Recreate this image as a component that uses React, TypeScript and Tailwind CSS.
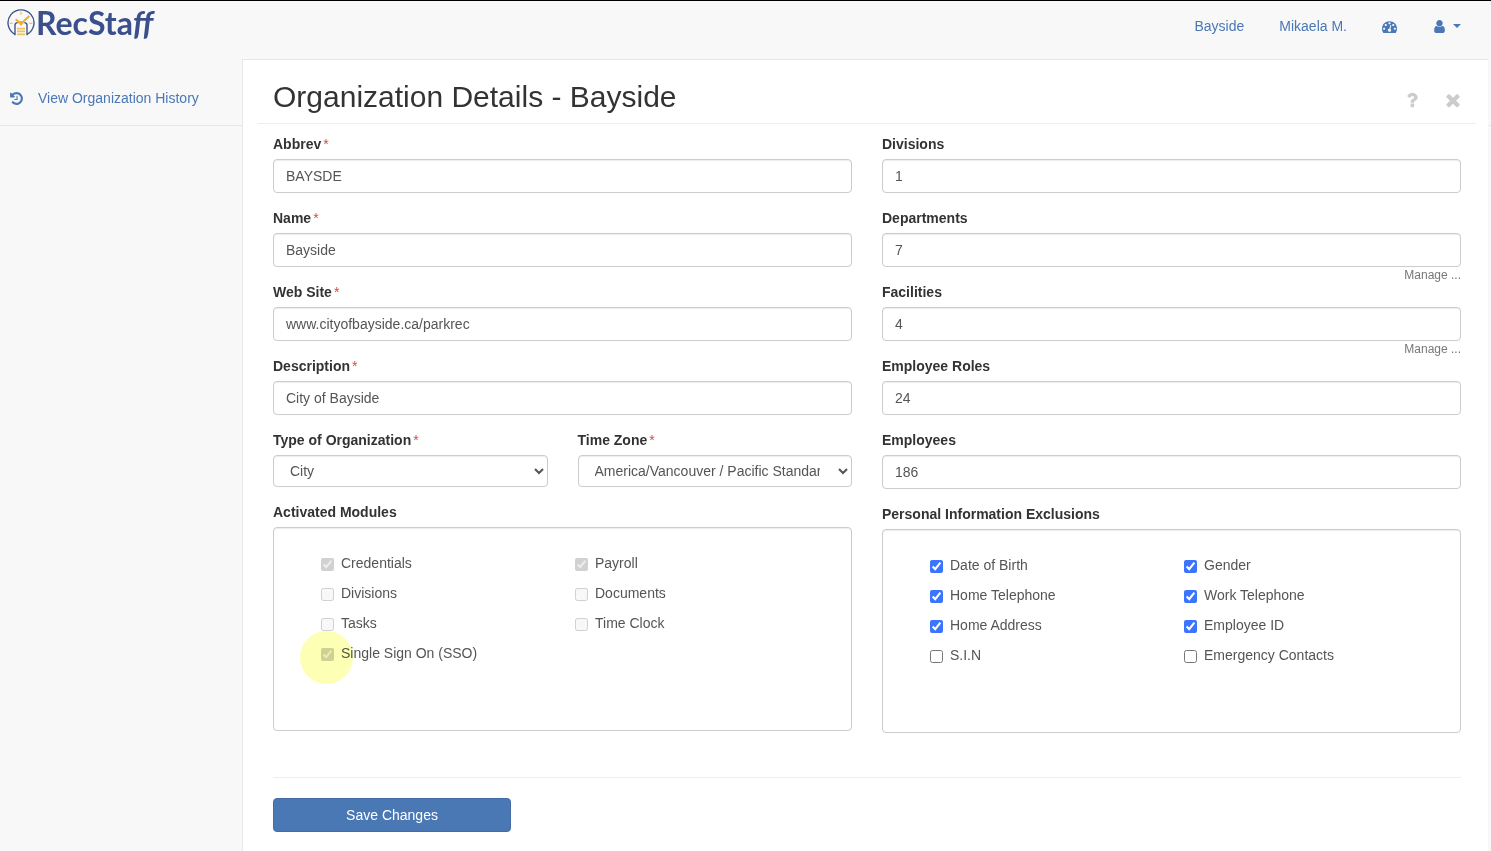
import {ReactNode} from 'react'

const leftFields = [
  {id: 'abbrev', label: 'Abbrev', value: 'BAYSDE'},
  {id: 'name', label: 'Name', value: 'Bayside'},
  {id: 'website', label: 'Web Site', value: 'www.cityofbayside.ca/parkrec'},
  {id: 'description', label: 'Description', value: 'City of Bayside'},
]

const rightFields = [
  {id: 'divisions', label: 'Divisions', value: '1'},
  {id: 'departments', label: 'Departments', value: '7', manage: true},
  {id: 'facilities', label: 'Facilities', value: '4', manage: true},
  {id: 'roles', label: 'Employee Roles', value: '24'},
  {id: 'employees', label: 'Employees', value: '186'},
]

const modules = [
  {name: 'Credentials', checked: true},
  {name: 'Payroll', checked: true},
  {name: 'Divisions', checked: false},
  {name: 'Documents', checked: false},
  {name: 'Tasks', checked: false},
  {name: 'Time Clock', checked: false},
  {name: 'Single Sign On (SSO)', checked: true, highlight: true},
]

const exclusions = [
  {name: 'Date of Birth', checked: true},
  {name: 'Gender', checked: true},
  {name: 'Home Telephone', checked: true},
  {name: 'Work Telephone', checked: true},
  {name: 'Home Address', checked: true},
  {name: 'Employee ID', checked: true},
  {name: 'S.I.N', checked: false},
  {name: 'Emergency Contacts', checked: false},
]

const icons = {
  history: 'M1664 896q0 156-61 298t-164 245-245 164-298 61q-172 0-327-72.5t-264-204.5q-7-10-6.5-22.5t8.5-20.5l137-138q10-9 25-9 16 2 23 12 73 95 179 147t225 52q104 0 198.5-40.5t163.5-109.5 109.5-163.5 40.5-198.5-40.5-198.5-109.5-163.5-163.5-109.5-198.5-40.5q-98 0-188 35.5t-160 101.5l137 138q31 30 14 69-17 40-59 40h-448q-26 0-45-19t-19-45v-448q0-42 40-59 39-17 69 14l130 129q107-101 244.5-156.5t284.5-55.5q156 0 298 61t245 164 164 245 61 298zm-640-288v448q0 14-9 23t-23 9h-320q-14 0-23-9t-9-23v-64q0-14 9-23t23-9h224v-352q0-14 9-23t23-9h64q14 0 23 9t9 23z',
  dashboard: 'M384 1152q0-53-37.5-90.5t-90.5-37.5-90.5 37.5-37.5 90.5 37.5 90.5 90.5 37.5 90.5-37.5 37.5-90.5zm192-448q0-53-37.5-90.5t-90.5-37.5-90.5 37.5-37.5 90.5 37.5 90.5 90.5 37.5 90.5-37.5 37.5-90.5zm428 481l101-382q6-26-7.5-48.5t-38.5-29.5-48 6.5-30 39.5l-101 382q-60 5-107 43.5t-63 98.5q-20 77 20 146t117 89 146-20 89-117q16-60-6-117t-72-91zm660-33q0-53-37.5-90.5t-90.5-37.5-90.5 37.5-37.5 90.5 37.5 90.5 90.5 37.5 90.5-37.5 37.5-90.5zm-640-640q0-53-37.5-90.5t-90.5-37.5-90.5 37.5-37.5 90.5 37.5 90.5 90.5 37.5 90.5-37.5 37.5-90.5zm448 192q0-53-37.5-90.5t-90.5-37.5-90.5 37.5-37.5 90.5 37.5 90.5 90.5 37.5 90.5-37.5 37.5-90.5zm320 448q0 261-141 483-19 29-54 29h-1402q-35 0-54-29-141-221-141-483 0-182 71-348t191-286 286-191 348-71 348 71 286 191 191 286 71 348z',
  user: 'M1536 1399q0 109-62.5 187t-150.5 78h-854q-88 0-150.5-78t-62.5-187q0-85 8.5-160.5t31.5-152 58.5-131 94-89 134.5-34.5q131 128 313 128t313-128q76 0 134.5 34.5t94 89 58.5 131 31.5 152 8.5 160.5zm-256-887q0 159-112.5 271.5t-271.5 112.5-271.5-112.5-112.5-271.5 112.5-271.5 271.5-112.5 271.5 112.5 112.5 271.5z',
  question: 'M1088 1256v240q0 16-12 28t-28 12h-240q-16 0-28-12t-12-28v-240q0-16 12-28t28-12h240q16 0 28 12t12 28zm316-600q0 54-15.5 101t-35 76.5-55 59.5-57.5 43.5-61 35.5q-41 23-68.5 65t-27.5 67q0 17-12 32.5t-28 15.5h-240q-15 0-25.5-18.5t-10.5-37.5v-45q0-83 65-156.5t143-108.5q59-27 84-56t25-76q0-42-46.5-74t-107.5-32q-65 0-108 29-35 25-107 115-13 16-31 16-12 0-25-8l-164-125q-13-10-15.5-25t5.5-28q160-266 464-266 80 0 161 31t146 83 106 127.5 41 158.5z',
  close: 'M1490 1322q0 40-28 68l-136 136q-28 28-68 28t-68-28l-294-294-294 294q-28 28-68 28t-68-28l-136-136q-28-28-28-68t28-68l294-294-294-294q-28-28-28-68t28-68l136-136q28-28 68-28t68 28l294 294 294-294q28-28 68-28t68 28l136 136q28 28 28 68t-28 68l-294 294 294 294q28 28 28 68z',
}

const inputClass = 'w-full h-[34px] px-3 text-sm text-[#555] bg-white border border-[#ccc] rounded shadow-[inset_0_1px_1px_rgba(0,0,0,0.075)]'
const selectClass = 'w-full h-8 pl-3 pr-[15px] text-sm text-[#555] bg-white border border-[#ccc] rounded shadow-[inset_0_1px_1px_rgba(0,0,0,0.075)]'

const Icon = ({name, className}: {name: keyof typeof icons, className: string}) => (
  <svg viewBox="0 0 1792 1792" fill="currentColor" className={className} aria-hidden="true">
    <path d={icons[name]} />
  </svg>
)

const Logo = () => (
  <a href="#" aria-label="RecStaff" className="flex items-center h-[43px] text-[#3a4f8b]">
    <svg viewBox="0 0 84 84" fill="none" className="w-7 h-7">
      <path d="M24 76A39 39 0 1 1 60 76" stroke="currentColor" strokeWidth="4" />
      <path d="M24 79V48Q24 42 32 41M60 79V48Q60 42 52 41" stroke="currentColor" strokeWidth="4" />
      <path d="M42 8v9M8 43h9M67 43h9" stroke="#efc35a" strokeWidth="4" />
      <path d="M26 31L42 44L67 21" stroke="#efb02e" strokeWidth="6" />
      <path d="M32 40L42 35L52 40L42 51Z" fill="#efb02e" />
      <path d="M30 59h24M30 67h24M30 76h24" stroke="#efc35a" strokeWidth="5" />
    </svg>
    <span className="ml-px text-[32px] leading-[43px] font-bold font-[Lato,sans-serif]">
      RecSta<span className="italic">ff</span>
    </span>
  </a>
)

const Label = ({htmlFor, required, children}: {htmlFor: string, required?: boolean, children: ReactNode}) => (
  <label htmlFor={htmlFor} className="block mb-[5px] text-sm leading-5 font-bold text-[#333]">
    {children}
    {required && <span className="ml-0.5 text-sm leading-3 font-normal text-[#c9504c]">*</span>}
  </label>
)

type Option = {name: string, checked: boolean, highlight?: boolean}

const CheckGroup = ({title, options, disabled}: {title: string, options: Option[], disabled?: boolean}) => (
  <fieldset>
    <legend className="mb-[5px] text-sm leading-5 font-bold text-[#333]">{title}</legend>
    <div className="grid grid-cols-2 gap-y-2.5 content-start h-[204px] pt-[25px] pl-[47px] pr-[22px] border border-[#ccc] rounded shadow-[inset_0_1px_1px_rgba(0,0,0,0.075)]">
      {options.map((option) => (
        <label key={option.name} className="relative flex items-start gap-[7px] text-sm leading-5 text-[#555]">
          <input type="checkbox" defaultChecked={option.checked} disabled={disabled} className="w-[13px] h-[13px] mt-[5px] accent-[#3b75ff]" />
          {option.name}
          {/* click highlight */}
          {option.highlight && <span className="absolute -left-[21px] -top-3 w-[53px] h-[53px] rounded-full bg-[#fdffb5] mix-blend-multiply" />}
        </label>
      ))}
    </div>
  </fieldset>
)

export default function App() {
  return (
    <div className="flex flex-col min-h-screen bg-[#f8f8f8] border-t border-black text-sm font-['Liberation_Sans',Arial,sans-serif]">
      <header className="flex items-start justify-between h-[58px] pl-[7px] pr-[30px]">
        <Logo />
        <nav className="flex items-center gap-[35px] h-[50px] text-[#4a78b5]">
          <a href="#">Bayside</a>
          <a href="#">Mikaela M.</a>
          <a href="#" aria-label="Dashboard">
            <Icon name="dashboard" className="w-[15px] h-[15px]" />
          </a>
          <button type="button" aria-label="Account" className="flex items-center gap-[6px]">
            <Icon name="user" className="w-[15px] h-[15px]" />
            <span className="border-x-4 border-x-transparent border-t-4 border-t-[#4a78b5]" />
          </button>
        </nav>
      </header>

      <div className="flex grow">
        <aside className="w-[242px] shrink-0">
          <a href="#" className="flex items-center gap-[14px] h-[67px] pl-[9px] pt-3 border-b border-[#e7e7e7] text-[#4a78b5]">
            <Icon name="history" className="w-[15px] h-[15px]" />
            View Organization History
          </a>
        </aside>

        <main className="grow min-w-0 bg-white border-t border-l border-[#e7e7e7]">
          <div className="flex items-start justify-between ml-[15px] mr-3 pt-[19px] pb-2 pl-[15px] pr-[13px] border-b border-[#eee]">
            <h1 className="text-[30px] leading-9 text-[#333]">Organization Details - Bayside</h1>
            <div className="flex gap-[21px] pt-[11px] text-[#ccc]">
              <button type="button" aria-label="Help">
                <Icon name="question" className="w-5 h-5" />
              </button>
              <button type="button" aria-label="Close">
                <Icon name="close" className="w-5 h-5" />
              </button>
            </div>
          </div>

          <form className="pl-[30px] pr-[27px] pt-2.5 pb-5">
            <div className="grid grid-cols-2 gap-[30px]">
              <div>
                {leftFields.map((field) => (
                  <div key={field.id} className="mb-[15px]">
                    <Label htmlFor={field.id} required>{field.label}</Label>
                    <input id={field.id} type="text" defaultValue={field.value} className={inputClass} />
                  </div>
                ))}

                <div className="grid grid-cols-2 gap-[30px] mb-[15px]">
                  <div>
                    <Label htmlFor="type" required>Type of Organization</Label>
                    <select id="type" className={selectClass}>
                      <option>City</option>
                    </select>
                  </div>
                  <div>
                    <Label htmlFor="timezone" required>Time Zone</Label>
                    <select id="timezone" className={selectClass}>
                      <option>America/Vancouver / Pacific Standard Time</option>
                    </select>
                  </div>
                </div>

                <CheckGroup title="Activated Modules" options={modules} disabled />
              </div>

              <div>
                {rightFields.map((field) => (
                  <div key={field.id}>
                    <Label htmlFor={field.id}>{field.label}</Label>
                    <input id={field.id} type="text" defaultValue={field.value} className={inputClass} />
                    <div className="h-[15px] text-right text-xs leading-[17px] text-[#777]">
                      {field.manage && <a href="#">Manage ...</a>}
                    </div>
                  </div>
                ))}

                <CheckGroup title="Personal Information Exclusions" options={exclusions} />
              </div>
            </div>

            <hr className="mt-11 mb-5 border-[#eee]" />
            <button type="submit" className="w-[238px] h-[34px] text-white bg-[#4a78b5] border border-[#426ca3] rounded">
              Save Changes
            </button>
          </form>
        </main>

        <div className="w-[3px] h-[67px] shrink-0 border-b border-[#e7e7e7]" />
      </div>
    </div>
  )
}
